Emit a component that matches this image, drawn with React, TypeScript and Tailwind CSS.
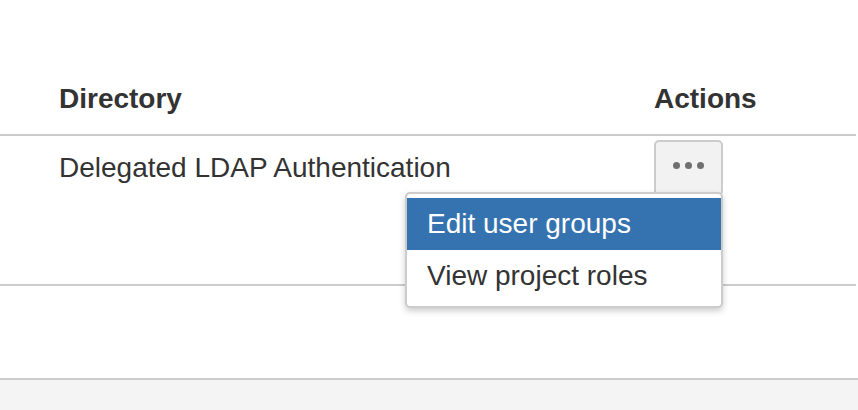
const actions = ["Edit user groups", "View project roles"]

function MoreButton() {
  return (
    <div className="relative w-[69px]">
      <div className="h-[56px] w-[69px] rounded-[5px] border-2 border-[#cccccc] bg-[#f2f2f2] flex justify-center gap-[5px] pt-[20px]">
        <span className="w-[7px] h-[7px] rounded-full bg-[#707070]" />
        <span className="w-[7px] h-[7px] rounded-full bg-[#707070]" />
        <span className="w-[7px] h-[7px] rounded-full bg-[#707070]" />
      </div>
      {/* open dropdown */}
      <div className="absolute right-0 top-[52px] z-10 w-[318px] rounded-[5px] border-2 border-[#cccccc] bg-white py-[4px] shadow-[0_3px_6px_rgba(0,0,0,0.2)]">
        {actions.map((label, i) => (
          <div
            key={label}
            className={
              i === 0
                ? "h-[52px] leading-[52px] pl-[20px] bg-[#3572b0] text-white"
                : "h-[52px] leading-[52px] pl-[20px] text-[#333333]"
            }
          >
            {label}
          </div>
        ))}
      </div>
    </div>
  )
}

export default function App() {
  return (
    <div className="w-[858px] h-[410px] flex flex-col bg-white text-[#333333] text-[28px] leading-[40px] font-['Liberation_Sans',Arial,sans-serif]">
      <div className="h-[380px] shrink-0 border-b-2 border-[#cccccc]">
        <div className="w-[856px]">
          <div className="grid grid-cols-[654px_1fr] pt-[79px] pb-[15px] border-b-2 border-[#cccccc] font-bold">
            <div className="pl-[59px]">Directory</div>
            <div>Actions</div>
          </div>
          <div className="grid grid-cols-[654px_1fr] h-[150px] border-b-2 border-[#cccccc]">
            <div className="pl-[59px] pt-[12px]">Delegated LDAP Authentication</div>
            <div className="pt-[4px]">
              <MoreButton />
            </div>
          </div>
        </div>
      </div>
      <div className="flex-1 bg-[#f4f4f4]" />
    </div>
  )
}
